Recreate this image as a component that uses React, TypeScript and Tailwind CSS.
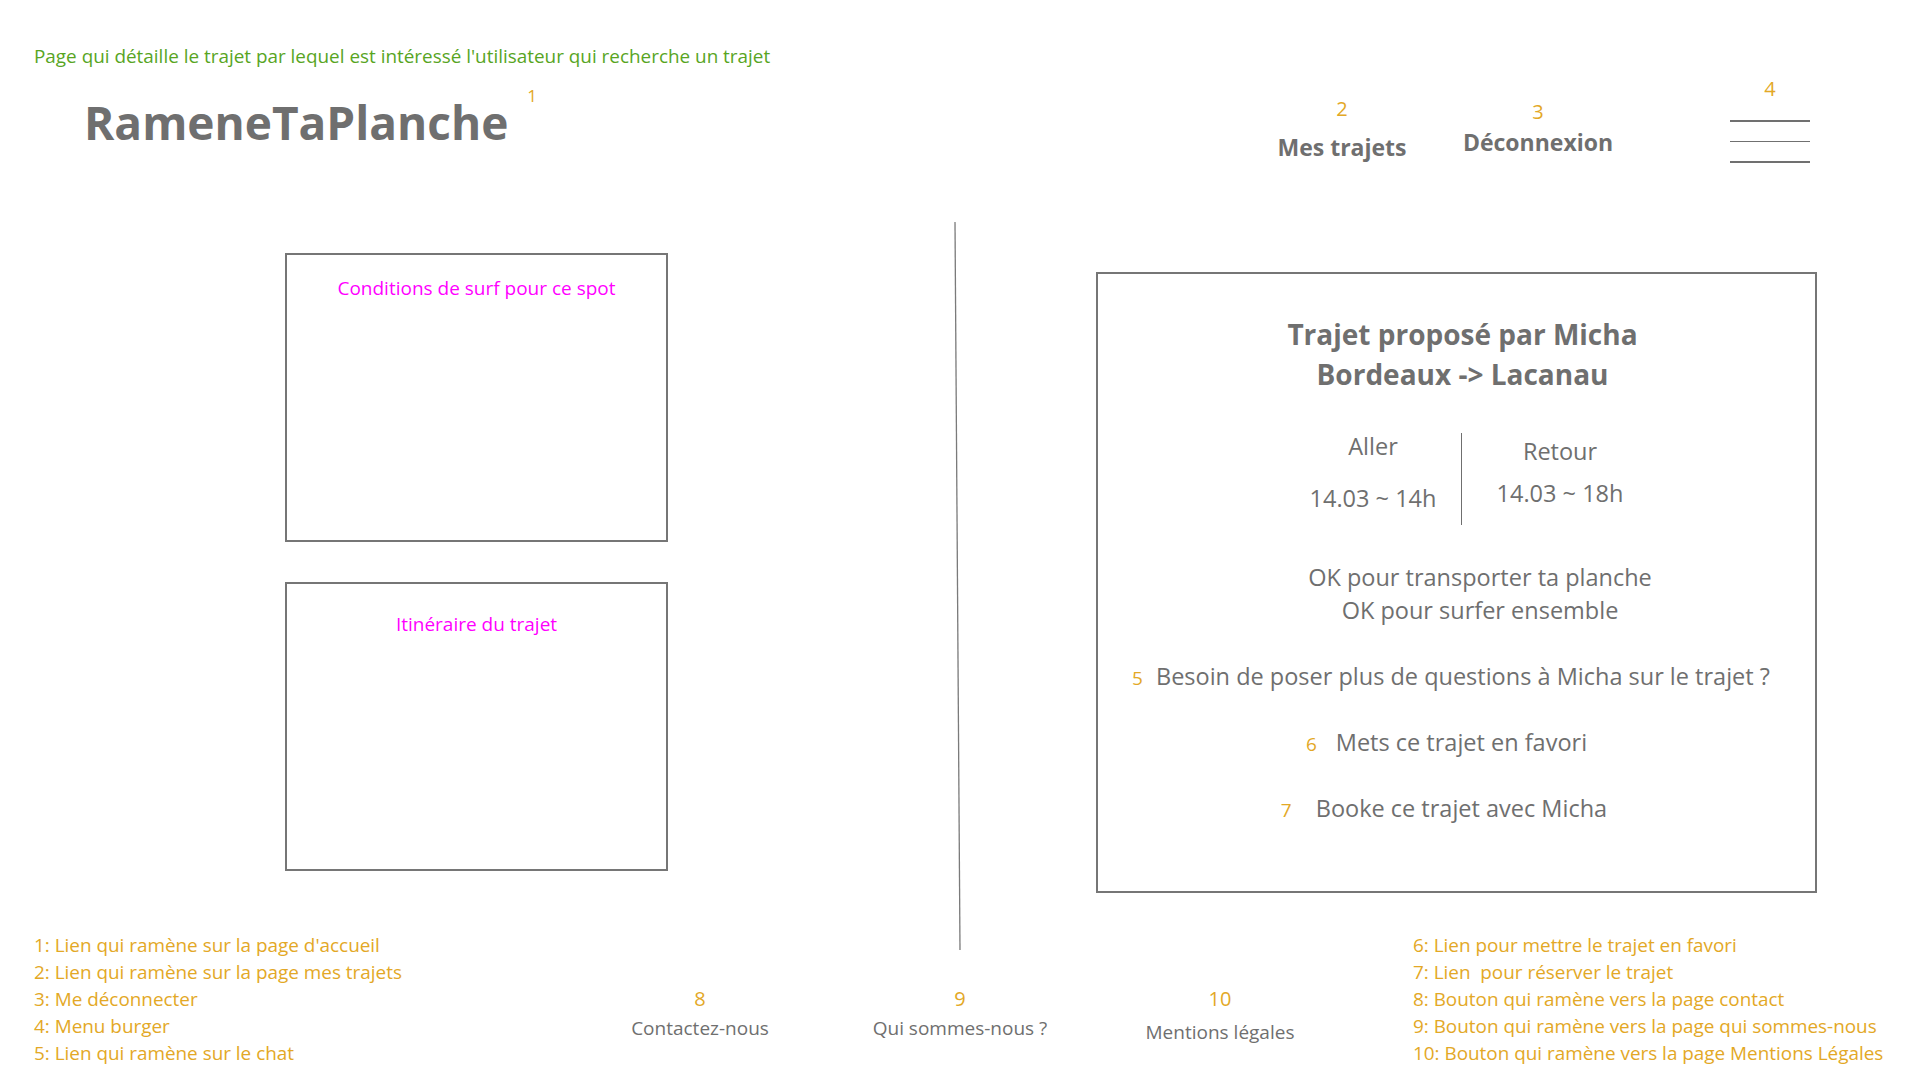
import React from 'react';

const legendLeft = [
  "1: Lien qui ramène sur la page d'accueil",
  '2: Lien qui ramène sur la page mes trajets',
  '3: Me déconnecter',
  '4: Menu burger',
  '5: Lien qui ramène sur le chat',
];

const legendRight = [
  '6: Lien pour mettre le trajet en favori',
  '7: Lien  pour réserver le trajet',
  '8: Bouton qui ramène vers la page contact',
  '9: Bouton qui ramène vers la page qui sommes-nous',
  '10: Bouton qui ramène vers la page Mentions Légales',
];

const footerLinks = [
  { n: '8', label: 'Contactez-nous', gap: 'mt-[4px]' },
  { n: '9', label: 'Qui sommes-nous ?', gap: 'mt-[4px]' },
  { n: '10', label: 'Mentions légales', gap: 'mt-[8px]' },
];

const Mark = ({ children, className = '' }: { children: React.ReactNode; className?: string }) => (
  <span className={`text-[#e3a826] ${className}`}>{children}</span>
);

const Box = ({ title, className = '' }: { title: string; className?: string }) => (
  <div className={`w-[383px] h-[289px] border-2 border-[#767676] flex flex-col items-center ${className}`}>
    <span className="text-[19px] leading-[26px] text-[#ff00ff]">{title}</span>
  </div>
);

export default function App() {
  return (
    <div className="w-[1920px] h-[1080px] bg-white overflow-hidden font-['Open_Sans',sans-serif] text-[#6f6f6f]">
      {/* annotation */}
      <div className="pt-[43px] pl-[34px] text-[18.9px] leading-[26px] text-[#58a51f]">
        Page qui détaille le trajet par lequel est intéressé l'utilisateur qui recherche un trajet
      </div>

      {/* header */}
      <div className="mt-[8px] h-[145px] flex items-start pl-[84px] pr-[110px]">
        <span className="mt-[17px] text-[46px] leading-[56px] font-bold text-[#6f6f6f]">RameneTaPlanche</span>
        <Mark className="mt-[9px] ml-[19px] text-[17px] leading-[20px]">1</Mark>

        <div className="ml-auto flex items-start">
          <div className="w-[160px] mt-[20px] flex flex-col items-center">
            <Mark className="text-[20px] leading-[24px]">2</Mark>
            <span className="mt-[11px] text-[23px] leading-[30px] font-bold">Mes trajets</span>
          </div>
          <div className="w-[180px] ml-[26px] mt-[23px] flex flex-col items-center">
            <Mark className="text-[20px] leading-[24px]">3</Mark>
            <span className="mt-[3px] text-[23px] leading-[30px] font-bold">Déconnexion</span>
          </div>
          <div className="w-[80px] ml-[102px] flex flex-col items-center">
            <Mark className="text-[20px] leading-[24px]">4</Mark>
            <div className="mt-[19px] w-full flex flex-col gap-[19px]">
              <div className="h-[1.5px] bg-[#707070]" />
              <div className="h-[1.5px] bg-[#707070]" />
              <div className="h-[1.5px] bg-[#707070]" />
            </div>
          </div>
        </div>
      </div>

      {/* body */}
      <div className="flex items-start">
        <div className="ml-[285px] mt-[31px] flex flex-col">
          <Box title="Conditions de surf pour ce spot" className="pt-[20px]" />
          <Box title="Itinéraire du trajet" className="mt-[40px] pt-[27px]" />
        </div>

        <svg className="ml-[285px] shrink-0" width="8" height="728" viewBox="0 0 8 728">
          <line x1="2" y1="0" x2="7" y2="728" stroke="#7a7a7a" strokeWidth="1.3" />
        </svg>

        <div className="ml-[135px] mt-[50px] w-[721px] h-[621px] border-2 border-[#767676] flex flex-col items-center">
          <div className="mt-[40px] ml-[12px] text-[28px] leading-[40px] font-bold text-center">
            <div>Trajet proposé par Micha</div>
            <div>Bordeaux -&gt; Lacanau</div>
          </div>

          <div className="mt-[36px] ml-[30px] flex items-start text-[23.5px] leading-[32px]">
            <div className="w-[160px] flex flex-col items-center">
              <span>Aller</span>
              <span className="mt-[20px]">14.03 ~ 14h</span>
            </div>
            <div className="ml-[8px] mt-[3px] w-px h-[92px] bg-[#6f6f6f]" />
            <div className="ml-[8px] mt-[5px] w-[180px] flex flex-col items-center">
              <span>Retour</span>
              <span className="mt-[10px]">14.03 ~ 18h</span>
            </div>
          </div>

          <div className="mt-[36px] ml-[47px] flex flex-col items-center text-[23.5px] leading-[33px]">
            <span>OK pour transporter ta planche</span>
            <span>OK pour surfer ensemble</span>
          </div>

          <div className="mt-[33px] mr-[11px] flex items-baseline text-[23.5px] leading-[32px]">
            <Mark className="text-[19px]">5</Mark>
            <span className="ml-[13px]">Besoin de poser plus de questions à Micha sur le trajet ?</span>
          </div>

          <div className="mt-[32px] mr-[20px] flex items-baseline text-[23.5px] leading-[32px]">
            <Mark className="text-[19px]">6</Mark>
            <span className="ml-[19px]">Mets ce trajet en favori</span>
          </div>

          <div className="mt-[32px] mr-[25px] flex items-baseline text-[23.5px] leading-[32px]">
            <Mark className="text-[19px]">7</Mark>
            <span className="ml-[24px]">Booke ce trajet avec Micha</span>
          </div>
        </div>
      </div>

      {/* footer */}
      <div className="mt-[-18px] flex items-start">
        <ul className="pl-[34px] w-[570px] text-[18.9px] leading-[27px] text-[#e3a826]">
          {legendLeft.map((l) => (
            <li key={l}>{l}</li>
          ))}
        </ul>

        <div className="mt-[55px] flex">
          {footerLinks.map((f) => (
            <div key={f.n} className="w-[260px] flex flex-col items-center">
              <Mark className="text-[20px] leading-[24px]">{f.n}</Mark>
              <span className={`${f.gap} text-[19px] leading-[26px]`}>{f.label}</span>
            </div>
          ))}
        </div>

        <ul className="ml-[63px] text-[18.9px] leading-[27px] text-[#e3a826] whitespace-pre">
          {legendRight.map((l) => (
            <li key={l}>{l}</li>
          ))}
        </ul>
      </div>
    </div>
  );
}
